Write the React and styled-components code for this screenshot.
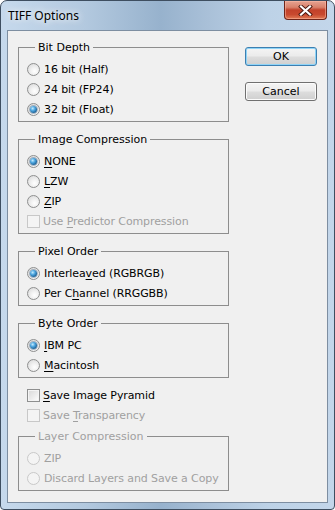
import styled, { createGlobalStyle } from "styled-components";

const Global = createGlobalStyle`
  body {
    margin: 0;
    background: #fff;
    font-family: "DejaVu Sans", "Liberation Sans", sans-serif;
    font-size: 11px;
  }
`;

const Window = styled.div`
  width: 335px;
  height: 510px;
  box-sizing: border-box;
  border: 1px solid #3e4e60;
  border-radius: 7px 7px 4px 4px;
  background: linear-gradient(90deg, #c6d9ec 0%, #b3c9df 25%, #97b2cd 48%, #a9c0d8 62%, #bdd2e7 80%, #c3d6ea 100%);
  display: flex;
  flex-direction: column;
  padding: 0 6px 6px 6px;
  overflow: hidden;
`;

const TitleBar = styled.div`
  height: 29px;
  display: flex;
  justify-content: space-between;
  align-items: flex-start;
  flex-shrink: 0;
`;

const Title = styled.div`
  font-family: "Noto Sans", "Open Sans", sans-serif;
  font-size: 12px;
  line-height: 16px;
  margin: 7px 0 0 1px;
  color: #000;
  text-shadow: 0 0 6px rgba(255, 255, 255, 0.9), 0 0 10px rgba(255, 255, 255, 0.7);
`;

const CloseButton = styled.div`
  width: 43px;
  height: 19px;
  margin-right: 1px;
  box-sizing: border-box;
  border: 1px solid #6e2419;
  border-top: none;
  border-radius: 0 0 4px 4px;
  background: linear-gradient(180deg, #e6a392 0%, #d9816b 35%, #c2412a 50%, #c8492f 75%, #e07a55 100%);
  box-shadow: inset 0 0 0 1px rgba(255, 190, 170, 0.5);
  display: flex;
  align-items: center;
  justify-content: center;
`;

const Client = styled.div`
  flex: 1;
  border: 1px solid #7d8ea1;
  background: #f0f0f0;
  display: flex;
  padding: 10px 10px 0 10px;
`;

const LeftColumn = styled.div`
  width: 211px;
  display: flex;
  flex-direction: column;
`;

const RightColumn = styled.div`
  width: 72px;
  margin: 6px 0 0 16px;
  display: flex;
  flex-direction: column;
  gap: 16px;
`;

const Group = styled.fieldset`
  margin: ${(p) => p.$mt || 0}px 0 0 0;
  padding: 5px 8px 2px 8px;
  border: 1px solid #8d8d8d;
  min-width: 0;
`;

const Legend = styled.legend`
  margin-left: 8px;
  padding: 0 3px;
  line-height: 13px;
  font-size: 11px;
  color: ${(p) => (p.$disabled ? "#a0a0a0" : "#000")};
`;

const Row = styled.div`
  height: 20px;
  display: flex;
  align-items: center;
  gap: 4px;
  color: ${(p) => (p.$disabled ? "#a0a0a0" : "#000")};
  white-space: nowrap;
  letter-spacing: -0.1px;
`;

const CheckRow = styled(Row)`
  gap: 3px;
  padding-left: ${(p) => (p.$inset ? 0 : 9)}px;
`;

const Options = styled.div`
  margin-top: ${(p) => p.$mt || 0}px;
`;

const Radio = styled.span`
  width: 13px;
  height: 13px;
  box-sizing: border-box;
  border-radius: 50%;
  border: 1px solid ${(p) => (p.$disabled ? "#c9c9c9" : "#8e8f8f")};
  background: ${(p) =>
    p.$disabled
      ? "#f4f4f4"
      : "radial-gradient(circle at 60% 65%, #ffffff 0%, #f2f2f2 35%, #d4d4d4 100%)"};
  display: flex;
  align-items: center;
  justify-content: center;
  flex-shrink: 0;

  &::after {
    content: "";
    display: ${(p) => (p.$checked ? "block" : "none")};
    width: 7px;
    height: 7px;
    border-radius: 50%;
    background: radial-gradient(circle at 38% 35%, #c4ecff 0%, #4fa7e0 35%, #1b5e93 75%, #0f3f68 100%);
    box-shadow: 0 0 0 1px rgba(30, 70, 110, 0.35);
  }
`;

const Checkbox = styled.span`
  width: 13px;
  height: 13px;
  box-sizing: border-box;
  border: 1px solid ${(p) => (p.$disabled ? "#c8c8c8" : "#8e8f8f")};
  background: ${(p) =>
    p.$disabled ? "#f4f4f4" : "linear-gradient(135deg, #d8d8d8 0%, #ececec 55%, #ffffff 100%)"};
  box-shadow: ${(p) => (p.$disabled ? "none" : "inset 0 0 0 1px #f4f4f4")};
  flex-shrink: 0;
`;

const Key = styled.span`
  text-decoration: underline;
  text-underline-offset: 2px;
`;

const Button = styled.div`
  height: 19px;
  box-sizing: border-box;
  border: 1px solid ${(p) => (p.$default ? "#3c7fb1" : "#707070")};
  border-radius: 3px;
  background: linear-gradient(180deg, #f4f4f4 0%, #ebebeb 48%, #dddddd 52%, #cfcfcf 100%);
  box-shadow: ${(p) =>
    p.$default ? "inset 0 0 0 1px #8fd4f7" : "inset 0 0 0 1px #fbfbfb"};
  display: flex;
  align-items: center;
  justify-content: center;
  color: #000;
  font-size: 11px;
`;

const RadioItem = ({ checked, disabled, children }) => (
  <Row $disabled={disabled}>
    <Radio $checked={checked} $disabled={disabled} />
    <span>{children}</span>
  </Row>
);

const CheckItem = ({ disabled, inset, children }) => (
  <CheckRow $disabled={disabled} $inset={inset}>
    <Checkbox $disabled={disabled} />
    <span>{children}</span>
  </CheckRow>
);

const CloseIcon = () => (
  <svg width="15" height="11" viewBox="0 0 15 11">
    <path d="M3 1.5 L12 9.5 M12 1.5 L3 9.5" stroke="#4a1810" strokeWidth="4" strokeLinecap="square" />
    <path d="M3 1.5 L12 9.5 M12 1.5 L3 9.5" stroke="#ffffff" strokeWidth="2.2" strokeLinecap="square" />
  </svg>
);

export default function App() {
  return (
    <>
      <Global />
      <Window>
        <TitleBar>
          <Title>TIFF Options</Title>
          <CloseButton>
            <CloseIcon />
          </CloseButton>
        </TitleBar>
        <Client>
          <LeftColumn>
            <Group>
              <Legend>Bit Depth</Legend>
              <RadioItem>16 bit (Half)</RadioItem>
              <RadioItem>24 bit (FP24)</RadioItem>
              <RadioItem checked>32 bit (Float)</RadioItem>
            </Group>

            <Group $mt={11}>
              <Legend>Image Compression</Legend>
              <RadioItem checked>
                <Key>N</Key>ONE
              </RadioItem>
              <RadioItem>
                <Key>L</Key>ZW
              </RadioItem>
              <RadioItem>
                <Key>Z</Key>IP
              </RadioItem>
              <CheckItem disabled inset>
                Use <Key>P</Key>redictor Compression
              </CheckItem>
            </Group>

            <Group $mt={11}>
              <Legend>Pixel Order</Legend>
              <RadioItem checked>
                Interlea<Key>v</Key>ed (RGBRGB)
              </RadioItem>
              <RadioItem>
                Per C<Key>h</Key>annel (RRGGBB)
              </RadioItem>
            </Group>

            <Group $mt={11}>
              <Legend>Byte Order</Legend>
              <RadioItem checked>
                <Key>I</Key>BM PC
              </RadioItem>
              <RadioItem>
                <Key>M</Key>acintosh
              </RadioItem>
            </Group>

            <Options $mt={7}>
              <CheckItem>
                <Key>S</Key>ave Image Pyramid
              </CheckItem>
              <CheckItem disabled>
                Save <Key>T</Key>ransparency
              </CheckItem>
            </Options>

            <Group $mt={5}>
              <Legend $disabled>Layer Compression</Legend>
              <RadioItem disabled>ZIP</RadioItem>
              <RadioItem disabled>Discard Layers and Save a Copy</RadioItem>
            </Group>
          </LeftColumn>

          <RightColumn>
            <Button $default>OK</Button>
            <Button>Cancel</Button>
          </RightColumn>
        </Client>
      </Window>
    </>
  );
}
